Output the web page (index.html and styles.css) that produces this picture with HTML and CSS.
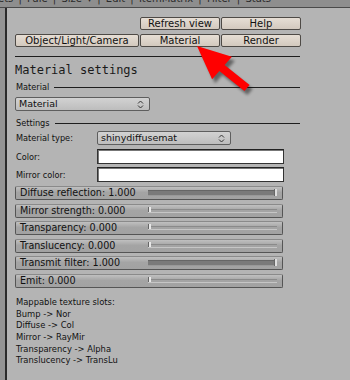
FILE: index.html
```html
<!DOCTYPE html>
<html>
<head>
<meta charset="utf-8">
<link rel="stylesheet" href="styles.css">
</head>
<body>
<div class="topbar"><span class="toptext">ets | Pale | Size ▾ | Edit | ItemMatrix | Filter | Stats</span></div>
<div class="main">
  <div class="gutter"></div>
  <div class="panel">
    <div class="btngrid">
      <div></div>
      <div class="btn">Refresh view</div>
      <div class="btn">Help</div>
      <div class="btn">Object/Light/Camera</div>
      <div class="btn">Material</div>
      <div class="btn">Render</div>
    </div>
    <div class="rule"></div>
    <div class="title">Material settings</div>
    <div class="section first"><span>Material</span><i></i></div>
    <div class="select wide"><span>Material</span><svg class="updown" width="7" height="9" viewBox="0 0 7 9"><path d="M1 3.5 L3.5 1 L6 3.5 M1 5.5 L3.5 8 L6 5.5" fill="none" stroke="#333" stroke-width="1"/></svg></div>
    <div class="section second"><span>Settings</span><i></i></div>
    <div class="row r-type"><span class="label">Material type:</span><div class="select"><span>shinydiffusemat</span><svg class="updown" width="7" height="9" viewBox="0 0 7 9"><path d="M1 3.5 L3.5 1 L6 3.5 M1 5.5 L3.5 8 L6 5.5" fill="none" stroke="#333" stroke-width="1"/></svg></div></div>
    <div class="row r-color"><span class="label">Color:</span><div class="swatch"></div></div>
    <div class="row r-mirror"><span class="label">Mirror color:</span><div class="swatch"></div></div>
    <div class="sliders">
      <div class="slider full"><span>Diffuse reflection: 1.000</span><div class="track"><div class="knob"></div></div></div>
      <div class="slider"><span>Mirror strength: 0.000</span><div class="track"><div class="knob"></div></div></div>
      <div class="slider"><span>Transparency: 0.000</span><div class="track"><div class="knob"></div></div></div>
      <div class="slider"><span>Translucency: 0.000</span><div class="track"><div class="knob"></div></div></div>
      <div class="slider full"><span>Transmit filter: 1.000</span><div class="track"><div class="knob"></div></div></div>
      <div class="slider"><span>Emit: 0.000</span><div class="track"><div class="knob"></div></div></div>
    </div>
    <div class="notes">
      <div>Mappable texture slots:</div>
      <div>Bump -&gt; Nor</div>
      <div>Diffuse -&gt; Col</div>
      <div>Mirror -&gt; RayMir</div>
      <div>Transparency -&gt; Alpha</div>
      <div>Translucency -&gt; TransLu</div>
    </div>
  </div>
</div>
<svg class="arrow" width="350" height="380" viewBox="0 0 350 380">
  <defs>
    <filter id="blur" x="-20%" y="-20%" width="140%" height="140%"><feGaussianBlur stdDeviation="1.5"/></filter>
  </defs>
  <polygon points="197,46 231.9,56.8 224.6,65 249.6,85 244.4,91 219.4,71 212.1,79.3" fill="#000" opacity="0.45" filter="url(#blur)" transform="translate(3,4)"/>
  <polygon points="197,46 231.9,56.8 224.6,65 249.6,85 244.4,91 219.4,71 212.1,79.3" fill="#ff0000"/>
</svg>
</body>
</html>
```
FILE: styles.css
```css
html, body {
  margin: 0;
  padding: 0;
}
body {
  width: 350px;
  height: 380px;
  overflow: hidden;
  background: #b4b4b4;
  font-family: "DejaVu Sans", sans-serif;
  color: #111;
  position: relative;
}
.topbar {
  height: 7px;
  background: #8e8e8e;
  border-bottom: 1px solid #4a4a4a;
  overflow: hidden;
  position: relative;
}
.toptext {
  display: block;
  font-size: 10px;
  line-height: 10px;
  margin-top: -6px;
  margin-left: -2px;
  white-space: nowrap;
  color: #2a2a2a;
  word-spacing: 2px;
}
.main {
  display: flex;
  height: 372px;
}
.gutter {
  width: 5px;
  background: #939393;
  border-right: 2px solid #2a2a2a;
}
.panel {
  width: 285px;
  padding: 9px 0 0 8px;
}
.btngrid {
  display: grid;
  grid-template-columns: 124px 80px 80px;
  grid-auto-rows: 13px;
  column-gap: 1px;
  row-gap: 4px;
}
.btn {
  box-sizing: border-box;
  border: 1px solid #4e4a46;
  border-radius: 2px;
  background: linear-gradient(#e6ded5, #d3c9be);
  font-size: 10px;
  line-height: 11px;
  text-align: center;
  color: #111;
}
.rule {
  height: 1px;
  background: #1e1e1e;
  margin-top: 9px;
}
.title {
  font-family: "DejaVu Sans Mono", monospace;
  font-size: 12px;
  line-height: 14px;
  margin-top: 6px;
  color: #1a1a1a;
}
.section {
  display: flex;
  align-items: center;
  height: 10px;
}
.section.first {
  margin-top: 5px;
}
.section.second {
  margin-top: 7px;
}
.section span {
  font-size: 8.2px;
  line-height: 10px;
  padding-left: 1px;
  margin-right: 5px;
}
.section i {
  flex: 1;
  height: 1px;
  background: #1e1e1e;
}
.select {
  box-sizing: border-box;
  width: 134px;
  height: 14px;
  border: 1px solid #5e5e5e;
  border-radius: 2px;
  background: linear-gradient(#d2d2d2, #bdbdbd);
  display: flex;
  align-items: center;
  justify-content: space-between;
  padding: 0 5px 0 3px;
  font-size: 9.5px;
  line-height: 12px;
}
.select.wide {
  width: 135px;
  margin-top: 5px;
}
.updown {
  display: block;
}
.row {
  display: flex;
  align-items: center;
}
.r-type {
  height: 14px;
  margin-top: 3px;
}
.r-color {
  height: 15px;
  margin-top: 4px;
}
.r-mirror {
  height: 15px;
  margin-top: 3px;
}
.label {
  width: 81px;
  padding-left: 1px;
  font-size: 8.2px;
}
.swatch {
  box-sizing: border-box;
  width: 187px;
  height: 15px;
  background: #fff;
  border: 1px solid #333;
  border-top-color: #222;
  box-shadow: inset 1px 1px 0 #777;
}
.sliders {
  display: flex;
  flex-direction: column;
  gap: 3.6px;
  margin-top: 4px;
}
.slider {
  box-sizing: border-box;
  width: 268px;
  height: 14px;
  border: 1px solid #555;
  border-top-color: #8a8a8a;
  border-radius: 2px;
  background: linear-gradient(#c0c0c0, #a4a4a4 45%, #a2a2a2);
  display: flex;
  align-items: center;
  padding-left: 4px;
  position: relative;
  font-size: 9.6px;
  line-height: 12px;
}
.slider span {
  width: 128px;
  white-space: nowrap;
}
.track {
  flex: 1;
  height: 2px;
  margin-right: 5px;
  border-top: 1px solid #8a8a8a;
  border-bottom: 1px solid #c6c6c6;
  position: relative;
}
.knob {
  position: absolute;
  left: 0;
  top: -3px;
  width: 2px;
  height: 5px;
  background: #e8e8e8;
  border-left: 1px solid #666;
}
.slider.full .track {
  height: 4px;
  background: #7a7a7a;
  border-top-color: #666;
  border-bottom-color: #999;
}
.slider.full .knob {
  left: auto;
  right: 0;
  top: -2px;
  height: 7px;
  background: #ddd;
}
.notes {
  margin-top: 9px;
  padding-left: 1px;
  font-size: 8.4px;
  line-height: 11.7px;
}
.arrow {
  position: absolute;
  left: 0;
  top: 0;
  pointer-events: none;
}
```
